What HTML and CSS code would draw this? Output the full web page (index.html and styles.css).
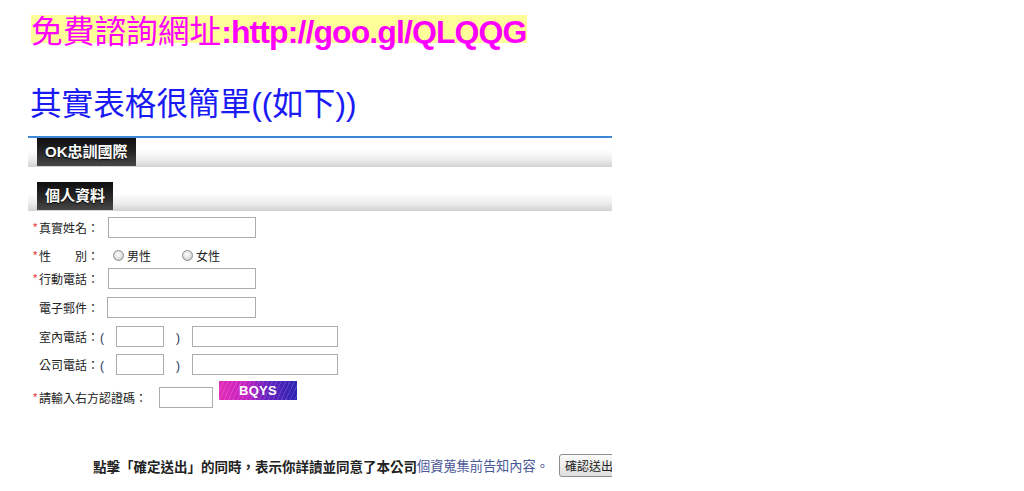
FILE: index.html
```html
<!DOCTYPE html>
<html lang="zh-Hant">
<head>
<meta charset="utf-8">
<title>免費諮詢</title>
<link rel="stylesheet" href="styles.css">
</head>
<body>
<div class="promo"><span class="promo-cjk">免費諮詢網址</span><span class="promo-url">:http://goo.gl/QLQQG</span></div>
<h2 class="headline">其實表格很簡單((如下))</h2>

<div class="panel">
  <div class="bar"><span class="tab">OK忠訓國際</span></div>
  <div class="bar bar-second"><span class="tab">個人資料</span></div>

  <form class="form">
    <div class="row row-name">
      <label class="label"><span class="star">*</span>真實姓名：</label>
      <input class="field" type="text">
    </div>
    <div class="row row-gender">
      <label class="label"><span class="star">*</span>性　　別：</label>
      <span class="choice"><input class="radio" type="radio" name="g">男性</span>
      <span class="choice choice-second"><input class="radio" type="radio" name="g">女性</span>
    </div>
    <div class="row row-mobile">
      <label class="label"><span class="star">*</span>行動電話：</label>
      <input class="field" type="text">
    </div>
    <div class="row row-mail">
      <label class="label label-plain">電子郵件：</label>
      <input class="field field-mail" type="text">
    </div>
    <div class="row row-home">
      <label class="label label-phone">室內電話：</label>
      <span class="paren-open">(</span>
      <input class="field field-area" type="text">
      <span class="paren-close">)</span>
      <input class="field field-num" type="text">
    </div>
    <div class="row row-office">
      <label class="label label-phone">公司電話：</label>
      <span class="paren-open">(</span>
      <input class="field field-area" type="text">
      <span class="paren-close">)</span>
      <input class="field field-num" type="text">
    </div>
    <div class="row row-captcha">
      <label class="label label-captcha"><span class="star">*</span>請輸入右方認證碼：</label>
      <input class="field field-code" type="text">
      <span class="captcha">BQYS</span>
    </div>
    <div class="row row-submit">
      <span class="notice">點擊「確定送出」的同時，表示你詳讀並同意了本公司</span><a class="notice-link" href="#">個資蒐集前告知內容。</a>
      <button class="submit" type="button">確認送出</button>
    </div>
  </form>
</div>
</body>
</html>
```

FILE: styles.css
```css
html, body {
  margin: 0;
  padding: 0;
  background: #fff;
}

body {
  font-family: "Liberation Sans", "Noto Sans CJK TC", sans-serif;
  color: #222;
}

.promo {
  width: fit-content;
  margin: 15px 0 0 31px;
  height: 28px;
  line-height: 28px;
  background: #ffff99;
  color: #ff00ff;
  white-space: nowrap;
}

.promo-cjk {
  font-family: "Noto Sans CJK TC", sans-serif;
  font-size: 31.7px;
}

.promo-url {
  font-family: "Liberation Sans", sans-serif;
  font-weight: bold;
  font-size: 32px;
  letter-spacing: -0.9px;
}

.headline {
  margin: 44px 0 0 30px;
  height: 34px;
  line-height: 34px;
  font-size: 31.6px;
  font-weight: normal;
  color: #1a1af5;
  white-space: nowrap;
}

.panel {
  width: 584px;
  margin: 15px 0 0 28px;
  border-top: 2px solid #3d87d8;
  overflow: hidden;
}

.bar {
  height: 29px;
  background: linear-gradient(#ffffff 0%, #ffffff 40%, #ececec 75%, #d2d2d2 100%);
}

.bar-second {
  margin-top: 15px;
}

.tab {
  display: inline-block;
  margin-left: 9px;
  height: 28px;
  line-height: 28px;
  padding: 0 8px;
  background: linear-gradient(#0e0e0e 0%, #262626 50%, #474747 100%);
  color: #fff;
  font-size: 15px;
  font-weight: bold;
  text-shadow: 0 1px 1px #000;
  box-sizing: border-box;
}

.form {
  margin: 0;
  font-size: 12px;
  color: #222;
}

.row {
  display: flex;
  align-items: center;
  height: 21px;
  white-space: nowrap;
}

.row-name { margin-top: 6px; }
.row-gender { margin-top: 6px; height: 22px; }
.row-mobile { margin-top: 2px; }
.row-mail { margin-top: 8px; }
.row-home { margin-top: 8px; }
.row-office { margin-top: 7px; }
.row-captcha { margin-top: 6px; align-items: flex-start; height: 27px; }
.row-submit { margin-top: 46px; height: 23px; }

.label {
  box-sizing: border-box;
  width: 80px;
  height: 21px;
  padding-left: 5px;
  padding-top: 3px;
  line-height: 18px;
}

.label-plain {
  padding-left: 11px;
  width: 79px;
}

.label-phone {
  padding-left: 11px;
  width: 72px;
}

.label-captcha {
  width: 131px;
  margin-top: 6px;
}

.star {
  display: inline-block;
  width: 6px;
  color: #e0281e;
  font-size: 11px;
  vertical-align: top;
  line-height: 14px;
}

.field {
  box-sizing: border-box;
  height: 21px;
  width: 148px;
  margin: 0;
  padding: 1px 3px;
  border: 1px solid #acacac;
  background: #fff;
  font-size: 12px;
}

.field-mail { width: 149px; }
.field-area { width: 48px; }
.field-num { width: 146px; }
.field-code { width: 54px; margin-top: 6px; }

.paren-open,
.paren-close {
  padding-top: 3px;
  line-height: 18px;
  color: #22305a;
}

.paren-open {
  width: 16px;
}

.paren-close {
  width: 28px;
  text-align: center;
}

.choice {
  display: inline-flex;
  align-items: center;
  margin-left: 5px;
}

.choice-second {
  margin-left: 31px;
}

.radio {
  appearance: none;
  -webkit-appearance: none;
  box-sizing: border-box;
  width: 11px;
  height: 11px;
  margin: 0 3px 0 0;
  border: 1px solid #8f8f8f;
  border-radius: 50%;
  background: radial-gradient(circle at 45% 40%, #ffffff 0%, #e4e4e4 45%, #bdbdbd 100%);
}

.captcha {
  display: inline-block;
  width: 78px;
  height: 19px;
  margin-left: 6px;
  line-height: 19px;
  text-align: center;
  color: #fff;
  font-family: "Liberation Sans", sans-serif;
  font-weight: bold;
  font-size: 13px;
  letter-spacing: 0.3px;
  background:
    repeating-linear-gradient(115deg, rgba(255, 255, 255, 0.14) 0 1px, transparent 1px 4px),
    linear-gradient(90deg, #e22bb8 0%, #c521c2 35%, #6a22c0 60%, #2b24b2 100%);
}

.notice {
  margin-left: 65px;
  font-size: 13.5px;
  font-weight: bold;
  color: #222;
  font-family: "Noto Sans CJK TC", sans-serif;
}

.notice-link {
  font-size: 13.2px;
  color: #4a5896;
  text-decoration: none;
  font-family: "Noto Sans CJK TC", sans-serif;
}

.submit {
  flex: none;
  margin-left: 10px;
  height: 23px;
  padding: 0 4px 0 5px;
  border: 1px solid #8e8e8e;
  border-radius: 3px;
  background: linear-gradient(#fbfbfb, #dedede);
  font-family: "Noto Sans CJK TC", sans-serif;
  font-size: 12px;
  color: #222;
  white-space: nowrap;
}
```
